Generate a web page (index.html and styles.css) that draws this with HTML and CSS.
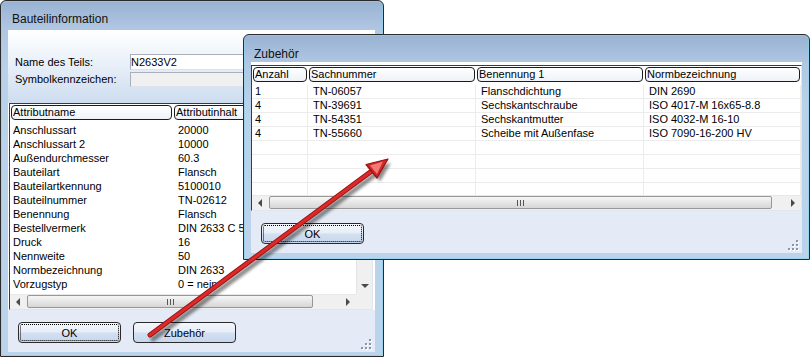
FILE: index.html
```html
<!DOCTYPE html>
<html lang="de">
  <head>
    <meta charset="UTF-8" />
    <meta name="viewport" content="width=device-width, initial-scale=1.0" />
    <title>Bauteilinformation</title>
    <link rel="stylesheet" href="styles.css">
  </head>
  <body>
    <div class="desk">
      <!-- Fenster 1: Bauteilinformation -->
      <section class="win win-info">
        <header class="win-title">Bauteilinformation</header>
        <div class="win-client">
          <div class="info-fields">
            <div class="field-row">
              <span class="field-label">Name des Teils:</span>
              <span class="field-box">N2633V2</span>
            </div>
            <div class="field-row">
              <span class="field-label">Symbolkennzeichen:</span>
              <span class="field-box is-disabled"></span>
            </div>
          </div>
          <div class="listview lv-attr">
            <div class="lv-body">
              <div class="lv-head"><span>Attributname</span><span>Attributinhalt</span></div>
              <div class="lv-row"><span>Anschlussart</span><span>20000</span></div>
              <div class="lv-row"><span>Anschlussart 2</span><span>10000</span></div>
              <div class="lv-row"><span>Außendurchmesser</span><span>60.3</span></div>
              <div class="lv-row"><span>Bauteilart</span><span>Flansch</span></div>
              <div class="lv-row"><span>Bauteilartkennung</span><span>5100010</span></div>
              <div class="lv-row"><span>Bauteilnummer</span><span>TN-02612</span></div>
              <div class="lv-row"><span>Benennung</span><span>Flansch</span></div>
              <div class="lv-row"><span>Bestellvermerk</span><span>DIN 2633 C 50 PN 16</span></div>
              <div class="lv-row"><span>Druck</span><span>16</span></div>
              <div class="lv-row"><span>Nennweite</span><span>50</span></div>
              <div class="lv-row"><span>Normbezeichnung</span><span>DIN 2633</span></div>
              <div class="lv-row"><span>Vorzugstyp</span><span>0 = nein</span></div>
            </div>
            <div class="vscroll">
              <span class="sb-btn sb-up"></span>
              <span class="sb-btn sb-down"></span>
            </div>
            <div class="hscroll">
              <span class="sb-btn sb-left"></span>
              <span class="sb-track"><span class="sb-thumb" style="width: 286px"></span></span>
              <span class="sb-btn sb-right"></span>
            </div>
            <div class="sb-corner"></div>
          </div>
          <div class="win-foot">
            <button class="btn is-focus">OK</button>
            <button class="btn">Zubehör</button>
            <svg class="grip" width="12" height="12" viewBox="0 0 12 12">
              <g fill="#fff">
                <rect x="10" y="2" width="2" height="2" />
                <rect x="6" y="6" width="2" height="2" /><rect x="10" y="6" width="2" height="2" />
                <rect x="2" y="10" width="2" height="2" /><rect x="6" y="10" width="2" height="2" /><rect x="10" y="10" width="2" height="2" />
              </g>
              <g fill="#8796ab">
                <rect x="9" y="1" width="2" height="2" />
                <rect x="5" y="5" width="2" height="2" /><rect x="9" y="5" width="2" height="2" />
                <rect x="1" y="9" width="2" height="2" /><rect x="5" y="9" width="2" height="2" /><rect x="9" y="9" width="2" height="2" />
              </g>
            </svg>
          </div>
        </div>
      </section>

      <!-- Fenster 2: Zubehör -->
      <section class="win win-zub">
        <header class="win-title">Zubehör</header>
        <div class="win-client">
          <div class="listview lv-zub">
            <div class="lv-body">
              <div class="lv-head"><span>Anzahl</span><span>Sachnummer</span><span>Benennung 1</span><span>Normbezeichnung</span></div>
              <div class="lv-row"><span>1</span><span>TN-06057</span><span>Flanschdichtung</span><span>DIN 2690</span></div>
              <div class="lv-row"><span>4</span><span>TN-39691</span><span>Sechskantschraube</span><span>ISO 4017-M 16x65-8.8</span></div>
              <div class="lv-row"><span>4</span><span>TN-54351</span><span>Sechskantmutter</span><span>ISO 4032-M 16-10</span></div>
              <div class="lv-row"><span>4</span><span>TN-55660</span><span>Scheibe mit Außenfase</span><span>ISO 7090-16-200 HV</span></div>
              <div class="lv-row"><span></span><span></span><span></span><span></span></div>
              <div class="lv-row"><span></span><span></span><span></span><span></span></div>
              <div class="lv-row"><span></span><span></span><span></span><span></span></div>
              <div class="lv-row"><span></span><span></span><span></span><span></span></div>
            </div>
            <div class="hscroll">
              <span class="sb-btn sb-left"></span>
              <span class="sb-track"><span class="sb-thumb" style="width: 503px"></span></span>
              <span class="sb-btn sb-right"></span>
            </div>
          </div>
          <div class="win-foot">
            <button class="btn is-focus">OK</button>
            <svg class="grip" width="12" height="12" viewBox="0 0 12 12">
              <g fill="#fff">
                <rect x="10" y="2" width="2" height="2" />
                <rect x="6" y="6" width="2" height="2" /><rect x="10" y="6" width="2" height="2" />
                <rect x="2" y="10" width="2" height="2" /><rect x="6" y="10" width="2" height="2" /><rect x="10" y="10" width="2" height="2" />
              </g>
              <g fill="#8796ab">
                <rect x="9" y="1" width="2" height="2" />
                <rect x="5" y="5" width="2" height="2" /><rect x="9" y="5" width="2" height="2" />
                <rect x="1" y="9" width="2" height="2" /><rect x="5" y="9" width="2" height="2" /><rect x="9" y="9" width="2" height="2" />
              </g>
            </svg>
          </div>
        </div>
      </section>

      <!-- roter Hinweispfeil -->
      <svg class="pointer" width="811" height="359" viewBox="0 0 811 359">
        <defs>
          <filter id="soft" x="-10%" y="-10%" width="120%" height="120%">
            <feGaussianBlur stdDeviation="1.6" />
          </filter>
        </defs>
        <g transform="translate(3 4)" filter="url(#soft)" opacity="0.45">
          <line x1="150" y1="335" x2="373" y2="170" stroke="#000" stroke-width="5" stroke-linecap="round" />
          <polygon points="388,159 367,164.5 377,177.5" fill="#000" />
        </g>
        <line x1="150" y1="335" x2="373" y2="170" stroke="#9c1212" stroke-width="5" stroke-linecap="round" />
        <line x1="150" y1="335" x2="373" y2="170" stroke="#dc2a2a" stroke-width="3" stroke-linecap="round" />
        <polygon points="388,159 366,164.5 377,178" fill="#d42424" stroke="#9c1212" stroke-width="1.2" stroke-linejoin="round" />
        <polygon points="383,161.5 370,165.5 377,174" fill="#f07a7a" />
      </svg>
    </div>
  </body>
</html>
```

FILE: styles.css
```css
* {
  box-sizing: border-box;
}
body {
  margin: 0;
  background: #fff;
  font: 11px "Liberation Sans", Arial, sans-serif;
  color: #000;
}
.desk {
  position: relative;
  width: 811px;
  height: 359px;
  overflow: hidden;
}

/* Fensterrahmen */
.win {
  position: absolute;
  display: flex;
  flex-direction: column;
  border: 1px solid #2a2a2a;
  border-radius: 6px 6px 0 0;
  background: linear-gradient(#98b2d2 0, #b0c7e3 28px, #bad1ea 70px, #bcd3ec 100%);
  box-shadow: inset 0 0 0 1px rgba(140, 210, 240, 0.7);
}
.win-info {
  left: 0;
  top: 0;
  width: 384px;
  height: 357px;
  padding: 0 8px 4px 7px;
}
.win-zub {
  left: 243px;
  top: 34px;
  width: 567px;
  height: 226px;
  padding: 0 7px 6px 7px;
}
.win-title {
  height: 29px;
  padding: 11px 0 0 4px;
  font-size: 12px;
  line-height: 14px;
  color: #111;
  white-space: nowrap;
}
.win-zub .win-title {
  height: 27px;
  padding: 12px 0 0 3px;
}
.win-client {
  flex: 1;
  display: flex;
  flex-direction: column;
  min-height: 0;
  background: #fff;
}

/* Kopfbereich mit Feldern */
.info-fields {
  height: 73px;
  padding: 24px 0 0 7px;
  display: flex;
  flex-direction: column;
  gap: 1px;
  background: linear-gradient(#fff 0, #f6f9fd 20%, #cddcef 100%);
}
.field-row {
  display: flex;
  align-items: center;
  height: 16px;
}
.field-label {
  width: 115px;
  white-space: nowrap;
}
.field-box {
  width: 240px;
  height: 16px;
  padding-left: 0;
  border: 1px solid #a9b0ba;
  border-right-color: #dde3ea;
  border-bottom-color: #dde3ea;
  background: #fff;
  line-height: 14px;
}
.field-box.is-disabled {
  height: 15px;
  background: #f0f0f0;
}

/* Listenansicht */
.listview {
  display: grid;
  border: 1px solid;
  border-color: #3a3a3a #e0e6ee #e0e6ee #3a3a3a;
  background: #fff;
}
.lv-attr {
  height: 207px;
  margin: 0 2px 0 1px;
  grid-template-columns: 1fr 16px;
  grid-template-rows: 1fr 15px;
}
.lv-zub {
  height: 146px;
  margin-top: 3px;
  grid-template-columns: 1fr;
  grid-template-rows: 1fr 15px;
}
.lv-body {
  overflow: hidden;
}
.lv-head,
.lv-row {
  display: grid;
}
.lv-attr .lv-head,
.lv-attr .lv-row {
  grid-template-columns: 163px 1fr;
}
.lv-zub .lv-head,
.lv-zub .lv-row {
  grid-template-columns: 56px 168px 168px 1fr;
}
.lv-head {
  height: 19px;
  padding-top: 1px;
}
.lv-head span {
  height: 15px;
  margin: 0 1px;
  padding-left: 1px;
  border: 1px solid #1c1c1c;
  border-radius: 4px;
  background: linear-gradient(#fff, #eef2f7);
  line-height: 13px;
  white-space: nowrap;
  overflow: hidden;
}
.lv-row {
  height: 14px;
  line-height: 14px;
}
.lv-row span {
  padding-left: 5px;
  white-space: nowrap;
  overflow: hidden;
}
.lv-row span:first-child {
  padding-left: 3px;
}
.lv-zub .lv-row span {
  border-right: 1px solid #ececec;
  border-bottom: 1px solid #ececec;
  line-height: 13px;
}

/* Bildlaufleisten */
.vscroll {
  display: flex;
  flex-direction: column;
  justify-content: space-between;
  background: #f0f0f0;
  border-left: 1px solid #e4e4e4;
}
.vscroll .sb-btn {
  width: auto;
  height: 16px;
}
.hscroll {
  display: flex;
  height: 15px;
  background: #f0f0f0;
  border-top: 1px solid #e8e8e8;
}
.sb-corner {
  background: #f0f0f0;
}
.sb-btn {
  width: 16px;
  display: flex;
  align-items: center;
  justify-content: center;
}
.sb-btn::before {
  content: "";
  border: 4px solid transparent;
}
.sb-left::before {
  border-left-width: 0;
  border-right-color: #4a4a4a;
}
.sb-right::before {
  border-right-width: 0;
  border-left-color: #4a4a4a;
}
.sb-down::before {
  border-bottom-width: 0;
  border-top-color: #4a4a4a;
}
.sb-up::before {
  border-top-width: 0;
  border-bottom-color: #4a4a4a;
}
.sb-track {
  flex: 1;
  padding: 0 0 1px 1px;
}
.sb-thumb {
  display: flex;
  align-items: center;
  justify-content: center;
  height: 13px;
  border: 1px solid #979797;
  border-radius: 2px;
  background: linear-gradient(#f6f6f6, #e6e6e6 50%, #d6d6d6);
}
.sb-thumb::before {
  content: "";
  width: 7px;
  height: 6px;
  background: linear-gradient(to right, #555 1px, transparent 1px) 0 0 / 3px 100%;
}

/* Fußleiste mit Schaltflächen */
.win-foot {
  flex: 1;
  display: flex;
  gap: 12px;
  padding: 12px 3px 2px 10px;
  background: #e4ebf6;
}
.btn {
  width: 103px;
  height: 21px;
  padding: 0;
  border: 1px solid #2a2a2a;
  border-radius: 4px;
  background: linear-gradient(#f4f7fb 0, #e7eef8 45%, #d2dff0 55%, #c6d7ed 100%);
  font: inherit;
  color: #000;
}
.btn.is-focus {
  outline: 1px dotted #000;
  outline-offset: -3px;
}
.grip {
  align-self: flex-end;
  margin-left: auto;
}

/* Pfeil liegt über beiden Fenstern */
.pointer {
  position: absolute;
  left: 0;
  top: 0;
  pointer-events: none;
}
```
